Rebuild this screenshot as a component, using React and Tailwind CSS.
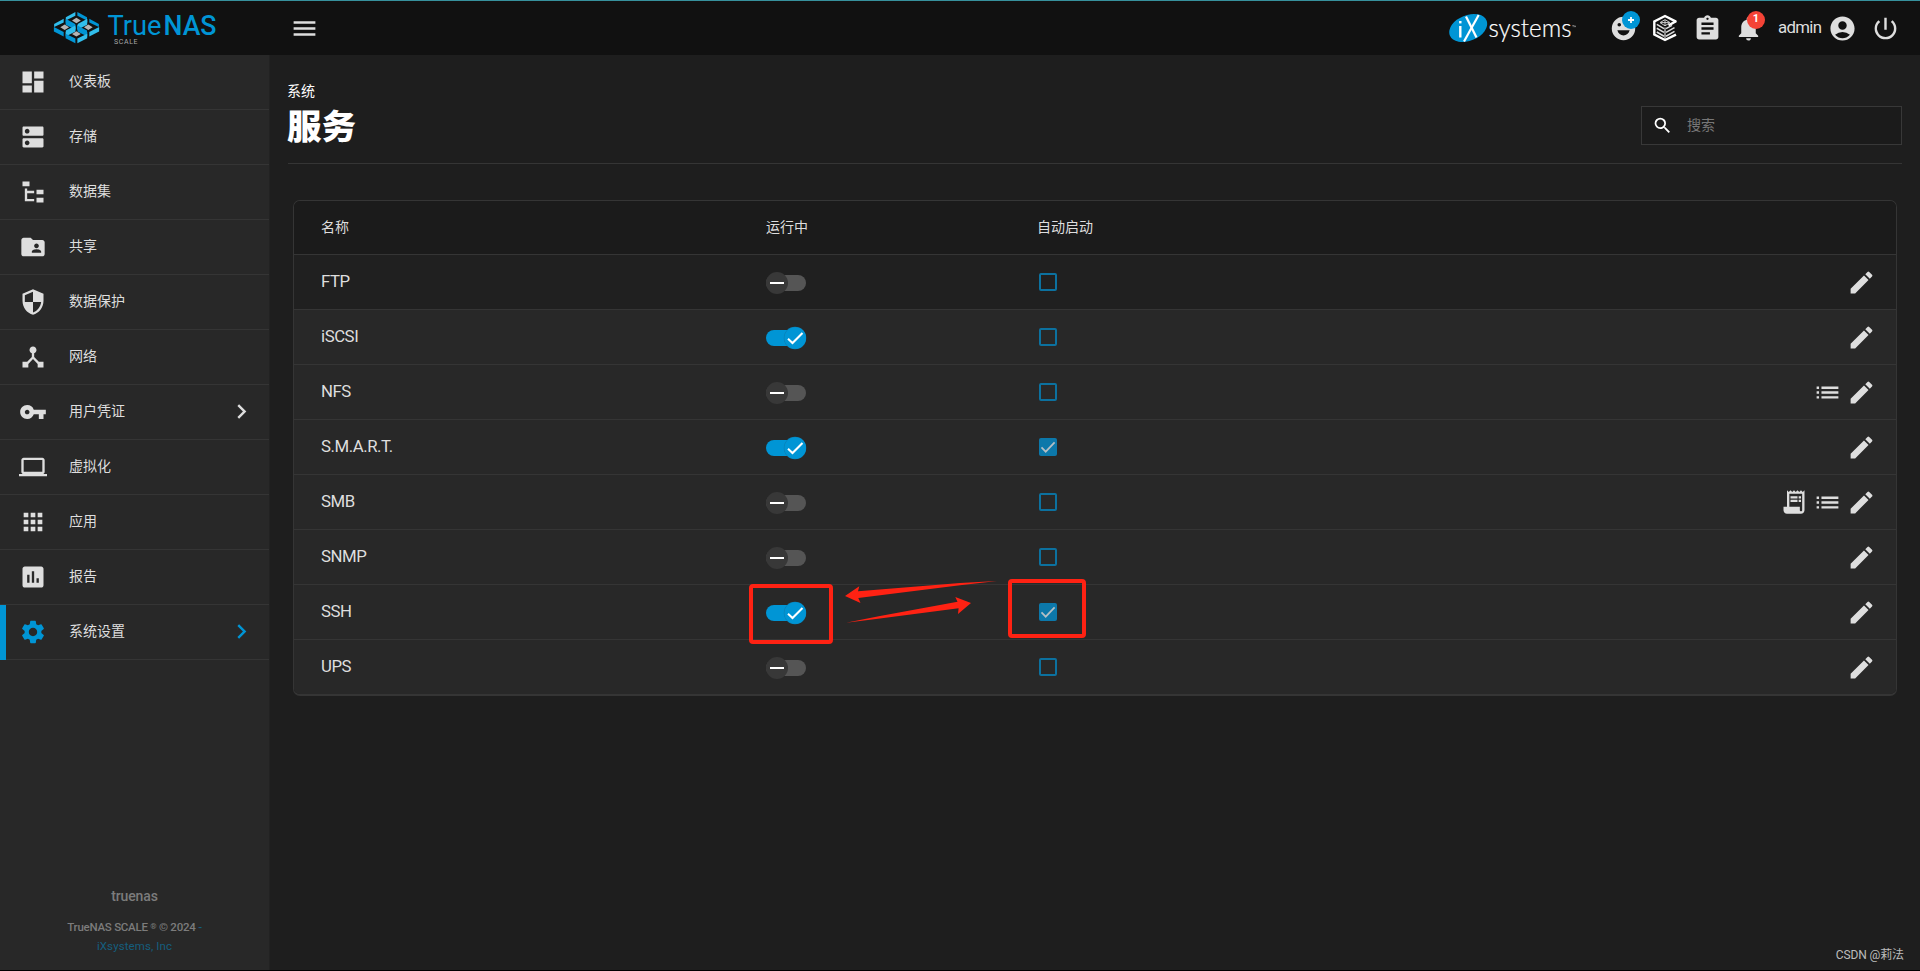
import React from "react";
import {
  MdDashboard, MdDns, MdFolderShared, MdSecurity, MdDeviceHub, MdVpnKey, MdApps,
  MdAssessment, MdSettings, MdChevronRight, MdEdit, MdList, MdReceiptLong, MdMenu,
  MdAssignment, MdNotifications, MdAccountCircle, MdPowerSettingsNew, MdSearch, MdLaptop,
} from "react-icons/md";

const FileTree = ({ size }) => (
  <svg width={size} height={size} viewBox="0 0 24 24" fill="currentColor">
    <path d="M3,3H9V7H3V3M15,10H21V14H15V10M15,17H21V21H15V17M13,13H7V18H13V20H5V9H7V11H13V13Z" />
  </svg>
);

const NAV = [
  ["仪表板", MdDashboard],
  ["存储", MdDns],
  ["数据集", FileTree],
  ["共享", MdFolderShared],
  ["数据保护", MdSecurity],
  ["网络", MdDeviceHub],
  ["用户凭证", MdVpnKey, true],
  ["虚拟化", MdLaptop],
  ["应用", MdApps],
  ["报告", MdAssessment],
  ["系统设置", MdSettings, true, true],
];

const SERVICES = [
  { name: "FTP" },
  { name: "iSCSI", on: true },
  { name: "NFS", list: true },
  { name: "S.M.A.R.T.", on: true, auto: true },
  { name: "SMB", list: true, log: true },
  { name: "SNMP" },
  { name: "SSH", on: true, auto: true },
  { name: "UPS" },
];

const CELLS = [[76.4, 19.6], [64.7, 26.3], [88.3, 26.3], [76.4, 33]];

function TrueNasLogo() {
  return (
    <svg width="170" height="40" viewBox="50 7 170 40">
      {CELLS.map(([x, y]) => (
        <g key={x + "-" + y} transform={`translate(${x} ${y})`}>
          <path d="M-1-8.6L-10.6-3.4V-.2L-1-4.8Z" fill="#31beec" />
          <path d="M1-8.6L10.6-3.4V-.2L1-4.8Z" fill="#0095d5" />
          <path d="M0-2.8L4.4 0L0 2.6L-4.4 0Z" fill="#b4b4b4" />
          <path d="M-10.8-.2L-1 4.6V9.2L-10.8 4.2Z" fill="#0095d5" />
          <path d="M10.8-.2L1 4.6V9.2L10.8 4.2Z" fill="#31beec" />
        </g>
      ))}
      <text x="107.5" y="33.6" fontFamily="Roboto" fontSize="28.5" fill="#0095d5" textLength="54" lengthAdjust="spacingAndGlyphs">True</text>
      <text x="163.5" y="33.6" fontFamily="Roboto" fontSize="28.5" fontWeight="500" fill="#0095d5" textLength="53" lengthAdjust="spacingAndGlyphs">NAS</text>
      <text x="114" y="42.6" fontFamily="Roboto" fontSize="7" fill="#a8a8a8" textLength="23.5">SCALE</text>
    </svg>
  );
}

function IxLogo() {
  return (
    <svg width="130" height="36" viewBox="1446 8 130 36">
      <ellipse cx="1468.2" cy="26" rx="19.8" ry="12.8" transform="rotate(-22 1468.2 26)" fill="#0095d5" />
      <g stroke="#fff" fill="none">
        <path d="M1460.3 24V35.5" strokeWidth="2.4" />
        <path d="M1460.3 19V21.4" strokeWidth="2.4" />
        <path d="M1466 14.5L1476.5 35.5" strokeWidth="2.2" />
        <path d="M1478.7 13L1464 39.5" strokeWidth="2.2" />
        <path d="M1572.3 23.5H1574.1M1573.2 23.5V25.2M1574.6 25.2V23.7L1575.2 24.6L1575.8 23.7V25.2" stroke="#bbb" strokeWidth=".5" />
      </g>
      <text x="1488.5" y="34.7" fontFamily="Lato" fontWeight="300" fontSize="26" fill="#fff" stroke="#fff" strokeWidth=".2" textLength="83" lengthAdjust="spacingAndGlyphs">systems</text>
    </svg>
  );
}

function Smiley() {
  return (
    <svg width="29" height="29" viewBox="0 0 24 24" fill="#dedede">
      <path fillRule="evenodd" d="M12 2.3a9.7 9.7 0 1 0 0 19.4a9.7 9.7 0 0 0 0-19.4ZM8.5 7.4a1.5 1.5 0 1 1 0 3a1.5 1.5 0 0 1 0-3ZM15.5 7.4a1.5 1.5 0 1 1 0 3a1.5 1.5 0 0 1 0-3ZM6.9 13.4H17.1C16.4 16.1 14.4 17.7 12 17.7S7.6 16.1 6.9 13.4Z" />
    </svg>
  );
}

function CommandIcon() {
  return (
    <svg width="26" height="28" viewBox="0 0 26 28" fill="none">
      <path d="M24 7.6L13 2L2.3 7.4V20.6L13 26L24 20.6" stroke="#fff" strokeWidth="2.4" />
      <path d="M24.4 7L16.6 11.4" stroke="#fff" strokeWidth="2.4" />
      <path d="M13 5.6L18 8.6L13 11.8L8 8.6ZM13 6V11.5M9 8.6H17" stroke="#dcdcdc" strokeWidth=".9" />
      <path d="M4.8 10.4L12 14.6M4.8 14.2L12 18.4M4.8 18L12 22.2M14 14.6L20 11.4M14 18.4L22.5 13.6M14 22.2L22.5 17.4" stroke="#dcdcdc" strokeWidth="1.6" />
      <path d="M13 13.5V25" stroke="#dcdcdc" strokeWidth="1.2" />
    </svg>
  );
}

function Toggle({ on }) {
  return (
    <svg width="42" height="26" viewBox="0 0 42 26" className="-ml-px mt-[2px] block">
      <rect x="1" y="5" width="40" height="16" rx="8" fill={on ? "#0095d5" : "#555"} />
      {on ? (
        <>
          <circle cx="30" cy="13" r="11.2" fill="#0b7fb4" />
          <circle cx="30.2" cy="13" r="10.8" fill="#0095d5" />
          <path d="M23 13.8L27.5 18L37.5 8" fill="none" stroke="#fff" strokeWidth="2.1" />
        </>
      ) : (
        <>
          <circle cx="12" cy="13" r="11" fill="#383838" />
          <path d="M5 13H19" stroke="#fff" strokeWidth="2" />
        </>
      )}
    </svg>
  );
}

function Check({ on }) {
  return on ? (
    <div className="h-[18px] w-[18px] rounded-[2px] bg-[#0c78aa]">
      <svg width="18" height="18" viewBox="0 0 18 18" fill="none">
        <path d="M2.5 9.3L6.7 13.7L15.6 4.3" stroke="#b4bfc5" strokeWidth="1.7" />
      </svg>
    </div>
  ) : (
    <div className="h-[18px] w-[18px] rounded-[2px] border-2 border-[#0c719f]" />
  );
}

function NavItem({ label, Icon, arrow, active }) {
  return (
    <div className="relative flex h-[55px] items-center border-b border-[#353535] pr-3 pb-px">
      {active && <div className="absolute top-0 left-0 h-[55px] w-[6px] bg-[#0095d5]" />}
      <span className={active ? "ml-[19px] text-[#0095d5]" : "ml-[19px]"}>
        <Icon size={28} />
      </span>
      <span className="ml-[22px] flex-1 text-[14px]">{label}</span>
      {arrow && (
        <MdChevronRight size={29} className={active ? "mr-px text-[#0095d5]" : "mr-px"} />
      )}
    </div>
  );
}

function Header() {
  return (
    <header className="flex h-[55px] w-full shrink-0 items-center border-t border-[#37919d] bg-[#111]">
      <div className="flex w-[270px] items-center pl-[50px]">
        <TrueNasLogo />
      </div>
      <MdMenu size={29} className="ml-5" />
      <div className="flex-1" />
      <IxLogo />
      <div className="relative ml-[33px] h-[29px] w-[29px]">
        <Smiley />
        <span className="absolute top-[-3px] left-[13px] flex h-[18px] w-[18px] items-center justify-center rounded-full bg-[#0095d5]">
          <svg width="6" height="6" viewBox="0 0 6 6">
            <path d="M3 0V6M0 3H6" stroke="#fff" strokeWidth="1.8" />
          </svg>
        </span>
      </div>
      <div className="ml-[14px]"><CommandIcon /></div>
      <MdAssignment size={29} className="ml-[15px]" />
      <div className="relative ml-[12px] h-[29px] w-[29px]">
        <MdNotifications size={29} />
        <span className="absolute top-[-3px] left-[13px] flex h-[18px] w-[18px] items-center justify-center rounded-full bg-[#f44336] text-[11px] font-bold text-white">1</span>
      </div>
      <span className="ml-[15px] w-[44px] pb-[2px] text-[16.8px] leading-none tracking-[-0.65px]">admin</span>
      <MdAccountCircle size={29} className="ml-[6px]" />
      <MdPowerSettingsNew size={29} className="mr-[20px] ml-[14px]" />
    </header>
  );
}

export default function App() {
  return (
    <div className="relative flex h-[971px] w-[1920px] flex-col overflow-hidden border-b border-black bg-[#1e1e1e] font-[Roboto,'Noto_Sans_CJK_SC',sans-serif] text-[#dedede]">
      <Header />
      <div className="flex min-h-0 flex-1">
        <aside className="flex w-[270px] flex-col border-r border-[#222] bg-[#282828]">
          <nav>
            {NAV.map(([label, Icon, arrow, active]) => (
              <NavItem key={label} label={label} Icon={Icon} arrow={arrow} active={active} />
            ))}
          </nav>
          <div className="flex-1" />
          <footer className="flex flex-col items-center pb-[14px] font-medium text-[#7c7c7c]">
            <div className="mb-[11px] text-[14px] leading-[20px] tracking-[-0.15px]">truenas</div>
            <div className="text-[11.5px] leading-[19px] tracking-[-0.25px]">
              TrueNAS SCALE <span className="text-[8px] align-[2px]">®</span> © 2024 <span className="text-[#155e7e]">-</span>
            </div>
            <div className="text-[11.5px] leading-[19px] font-normal tracking-[0.1px] text-[#155e7e]">iXsystems, Inc</div>
          </footer>
        </aside>

        <main className="flex-1 pr-[18px] pl-[18px]">
          <div className="flex h-[109px] items-end justify-between border-b border-[#353535] text-white">
            <div className="-ml-px pb-[11px]">
              <div className="text-[14px] leading-[20px]">系统</div>
              <h1 className="mt-px text-[34.5px] leading-[50px] font-black">服务</h1>
            </div>
            <div className="mb-[18px] flex h-[39px] w-[261px] items-center border border-[#383838] bg-[#1b1b1b] pl-[10px]">
              <MdSearch size={21} />
              <span className="ml-[14px] text-[14px] text-[#777]">搜索</span>
            </div>
          </div>

          <section className="mt-[36px] mr-[5px] ml-[5px] overflow-hidden rounded-[7px] border border-b-2 border-[#353535]">
            <div className="flex h-[54px] items-center border-b border-[#353535] bg-[#1b1b1b] pl-[27px] text-[14px]">
              <span className="w-[445px]">名称</span>
              <span className="w-[271px]">运行中</span>
              <span>自动启动</span>
            </div>
            {SERVICES.map((s, i) => (
              <div
                key={s.name}
                className={
                  "flex items-center pl-[27px] " +
                  (i === 0 ? "bg-[#202020] " : "bg-[#282828] ") +
                  (i < 7 ? "h-[55px] border-b border-[#353535]" : "h-[54px]")
                }
              >
                <span className="-mt-[2px] w-[445px] text-[16.8px] leading-[24px] tracking-[-0.45px]">{s.name}</span>
                <span className="w-[273px]"><Toggle on={s.on} /></span>
                <Check on={s.auto} />
                <span className="flex flex-1 items-center justify-end gap-[5px] pr-[20px]">
                  {s.log && <MdReceiptLong size={28} />}
                  {s.list && <MdList size={29} />}
                  <MdEdit size={29} />
                </span>
              </div>
            ))}
          </section>
        </main>
      </div>

      <div className="absolute top-[584px] left-[749px] h-[60px] w-[84px] rounded-[4px] border-4 border-[#ff2213]" />
      <div className="absolute top-[579px] left-[1008px] h-[59px] w-[78px] rounded-[4px] border-4 border-[#ff2213]" />
      <svg className="absolute top-[575px] left-[840px]" width="160" height="55" viewBox="840 575 160 55" fill="#ff2213">
        <path d="M845 596L859.3 586.3L858 591.3L960 583L997 581L960 585.2L858.3 598L860.5 603Z" />
        <path d="M846 622.7L880 616L957.5 601.8L955.3 597L971 603L958 614L958.6 608.2L880 618.6Z" />
      </svg>
      <div className="absolute right-[16px] bottom-[6px] text-[12px] leading-[18px] tracking-[-0.1px] text-[#bcbcbc]">CSDN @莉法</div>
    </div>
  );
}
